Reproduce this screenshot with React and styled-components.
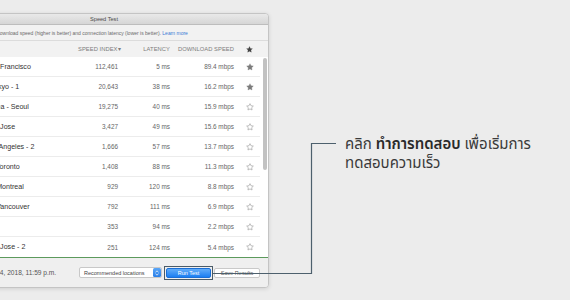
import React from 'react';
import styled, { createGlobalStyle } from 'styled-components';

const GlobalStyle = createGlobalStyle`
  html, body {
    margin: 0;
    padding: 0;
    background: #ececec;
  }
  * { box-sizing: border-box; }
`;

const Page = styled.div`
  position: relative;
  width: 570px;
  height: 300px;
  overflow: hidden;
  display: flex;
  align-items: flex-start;
  background: #ececec;
  font-family: "Liberation Sans", Arial, sans-serif;
`;

const Window = styled.div`
  flex: none;
  margin-left: -61px;
  margin-top: 13px;
  width: 330px;
  height: 275px;
  display: flex;
  flex-direction: column;
  background: #f2f2f2;
  border: 1px solid #c4c4c4;
  border-radius: 4px;
  box-shadow: 0 1px 4px rgba(0, 0, 0, 0.12);
  overflow: hidden;
`;

const TitleBar = styled.div`
  height: 11px;
  flex: none;
  display: flex;
  align-items: center;
  justify-content: center;
  background: linear-gradient(#e9e9e9, #d6d6d6);
  border-bottom: 1px solid #bdbdbd;
  font-size: 5.6px;
  color: #4a4a4a;
`;

const Subtitle = styled.div`
  height: 16px;
  flex: none;
  display: flex;
  align-items: center;
  padding-left: 35px;
  border-bottom: 1px solid #dcdcdc;
  font-size: 5px;
  color: #6a6a6a;
  white-space: nowrap;
`;

const LearnMore = styled.span`
  color: #3a7bd5;
`;

const cols = `
  grid-template-columns: 113px 40px 52px 64px 26px;
  padding-left: 25px;
`;

const HeaderRow = styled.div`
  height: 16px;
  flex: none;
  display: grid;
  ${cols}
  align-items: center;
  font-size: 5.8px;
  color: #7d7d7d;
  letter-spacing: 0.05px;
  white-space: nowrap;
`;

const HeadCell = styled.div`
  text-align: ${p => (p.$left ? 'left' : 'right')};
`;

const Body = styled.div`
  flex: none;
  display: flex;
  background: #fff;
  height: 200px;
`;

const List = styled.div`
  width: 320px;
  display: flex;
  flex-direction: column;
`;

const Row = styled.div`
  height: 20px;
  display: grid;
  ${cols}
  align-items: center;
  border-bottom: ${p => (p.$last ? 'none' : '1px solid #ececec')};
  white-space: nowrap;
`;

const Name = styled.div`
  font-size: 7.1px;
  color: #333;
`;

const Num = styled.div`
  font-size: 6.4px;
  color: #666;
  text-align: right;
`;

const StarCell = styled.div`
  display: flex;
  padding-left: ${p => p.$pad}px;
`;

const Track = styled.div`
  width: 8px;
  padding-left: 3px;
  padding-top: 1px;
`;

const Thumb = styled.div`
  width: 4px;
  height: 112px;
  border-radius: 2px;
  background: #c2c2c2;
`;

const GreenLine = styled.div`
  height: 1px;
  flex: none;
  background: #5c9a5c;
`;

const BottomBar = styled.div`
  flex: 1;
  display: flex;
  align-items: center;
  padding-left: 43px;
  padding-right: 8px;
  background: #efefef;
`;

const DateText = styled.div`
  font-size: 6.6px;
  color: #555;
  white-space: nowrap;
`;

const Controls = styled.div`
  margin-left: auto;
  display: flex;
  align-items: center;
  gap: ${p => p.$gap}px;
`;

const Select = styled.div`
  width: 83px;
  height: 11px;
  display: flex;
  align-items: center;
  justify-content: space-between;
  padding-left: 4px;
  background: #fff;
  border: 1px solid #c8c8c8;
  border-radius: 2px;
  font-size: 5.5px;
  color: #444;
`;

const Stepper = styled.div`
  width: 8px;
  height: 9px;
  display: flex;
  align-items: center;
  justify-content: center;
  background: linear-gradient(#5aa6f7, #2a7fe8);
  border-radius: 1.5px;
`;

const Highlight = styled.div`
  border: 1.5px solid #4b5c69;
  padding: 1px;
`;

const Button = styled.div`
  height: 10px;
  width: ${p => p.$w}px;
  display: flex;
  align-items: center;
  justify-content: center;
  font-size: 5.5px;
  border-radius: 2px;
  color: ${p => (p.$primary ? '#fff' : '#555')};
  background: ${p => (p.$primary ? 'linear-gradient(#62adf9, #1b7ef2)' : '#fff')};
  border: 1px solid ${p => (p.$primary ? '#1a6fd6' : '#c9c9c9')};
`;

const Callout = styled.div`
  margin-left: 76px;
  margin-top: 135px;
  display: flex;
  flex-direction: column;
  font-family: "Noto Sans Thai", "Noto Sans", "Tahoma", sans-serif;
  font-size: 15px;
  color: #3a3a3a;
  white-space: nowrap;
`;

const CalloutLine = styled.div`
  height: 19px;
  line-height: 19px;
`;

const Strong = styled.b`
  font-weight: 600;
  color: #2a2a2a;
`;

const Connector = styled.svg`
  position: absolute;
  left: 0;
  top: 0;
  pointer-events: none;
`;

const STAR = 'M12 2l3.09 6.26L22 9.27l-5 4.87 1.18 6.88L12 17.77l-6.18 3.25L7 14.14 2 9.27l6.91-1.01L12 2z';

const Star = ({ filled, size = 8, color }) => (
  <svg width={size} height={size} viewBox="0 0 24 24">
    <path
      d={STAR}
      fill={filled ? color || '#7c7c7c' : 'none'}
      stroke={filled ? color || '#7c7c7c' : '#a9a9a9'}
      strokeWidth={filled ? 1 : 2.2}
      strokeLinejoin="round"
    />
  </svg>
);

const servers = [
  { name: 'USA - San Francisco', index: '112,461', latency: '5 ms', speed: '89.4 mbps', fav: true },
  { name: 'Japan - Tokyo - 1', index: '20,643', latency: '38 ms', speed: '16.2 mbps', fav: true },
  { name: 'South Korea - Seoul', index: '19,275', latency: '40 ms', speed: '15.9 mbps' },
  { name: 'USA - San Jose', index: '3,427', latency: '49 ms', speed: '15.6 mbps' },
  { name: 'USA - Los Angeles - 2', index: '1,666', latency: '57 ms', speed: '13.7 mbps' },
  { name: 'Canada - Toronto', index: '1,408', latency: '88 ms', speed: '11.3 mbps' },
  { name: 'Canada - Montreal', index: '929', latency: '120 ms', speed: '8.8 mbps' },
  { name: 'Canada - Vancouver', index: '792', latency: '111 ms', speed: '6.9 mbps' },
  { name: 'Mexico', index: '353', latency: '94 ms', speed: '2.2 mbps' },
  { name: 'USA - San Jose - 2', index: '251', latency: '124 ms', speed: '5.4 mbps' },
];

const App = () => {
  return (
    <>
      <GlobalStyle />
      <Page>
        <Window>
          <TitleBar>Speed Test</TitleBar>
          <Subtitle>
            Compare download speed (higher is better) and connection latency (lower is better).&nbsp;
            <LearnMore>Learn more</LearnMore>
          </Subtitle>
          <HeaderRow>
            <HeadCell $left />
            <HeadCell>SPEED INDEX▾</HeadCell>
            <HeadCell>LATENCY</HeadCell>
            <HeadCell>DOWNLOAD SPEED</HeadCell>
            <StarCell $pad={12}>
              <Star filled size={7} color="#444" />
            </StarCell>
          </HeaderRow>
          <Body>
            <List>
              {servers.map((s, i) => (
                <Row key={i} $last={i === servers.length - 1}>
                  <Name>{s.name}</Name>
                  <Num>{s.index}</Num>
                  <Num>{s.latency}</Num>
                  <Num>{s.speed}</Num>
                  <StarCell $pad={12}>
                    <Star filled={s.fav} />
                  </StarCell>
                </Row>
              ))}
            </List>
            <Track>
              <Thumb />
            </Track>
          </Body>
          <GreenLine />
          <BottomBar>
            <DateText>Mar 14, 2018, 11:59 p.m.</DateText>
            <Controls $gap={2}>
              <Select>
                Recommended locations
                <Stepper>
                  <svg width="4" height="6" viewBox="0 0 4 6">
                    <path d="M0.5 2.4L2 0.8 3.5 2.4M0.5 3.6L2 5.2 3.5 3.6" fill="none" stroke="#fff" strokeWidth="0.7" />
                  </svg>
                </Stepper>
              </Select>
              <Controls $gap={1}>
                <Highlight>
                  <Button $primary $w={45}>Run Test</Button>
                </Highlight>
                <Button $w={46}>Save Results</Button>
              </Controls>
            </Controls>
          </BottomBar>
        </Window>
        <Callout>
          <CalloutLine>
            คลิก <Strong>ทำการทดสอบ</Strong> เพื่อเริ่มการ
          </CalloutLine>
          <CalloutLine>ทดสอบความเร็ว</CalloutLine>
        </Callout>
        <Connector width="570" height="300" viewBox="0 0 570 300">
          <path d="M213 273.5H311.5V143.5H336" fill="none" stroke="#4d606d" strokeWidth="1.2" />
        </Connector>
      </Page>
    </>
  );
};

export default App;
